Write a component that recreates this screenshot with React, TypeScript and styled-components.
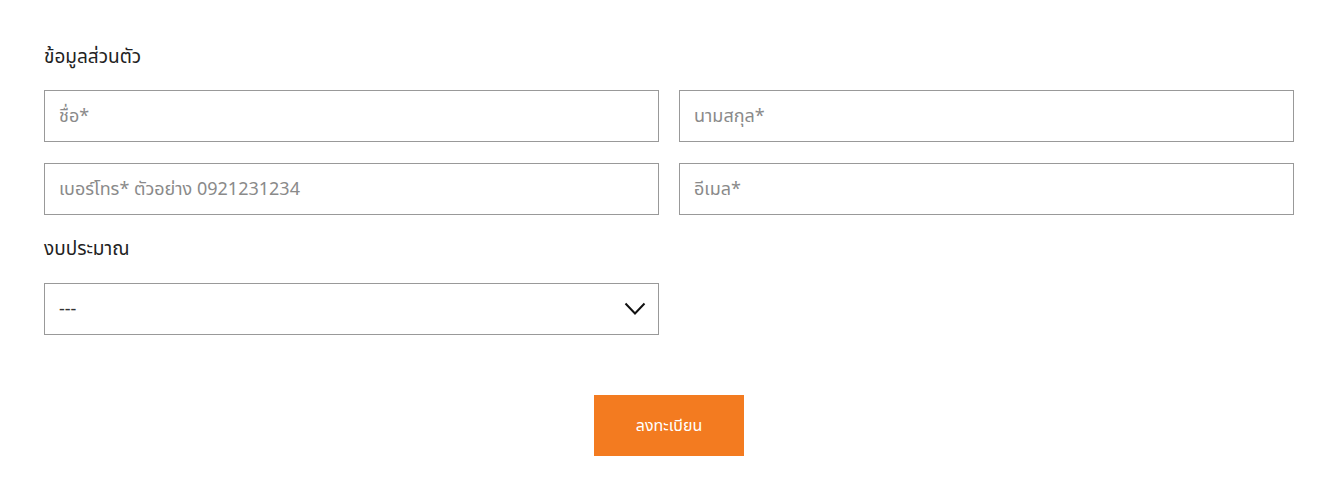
import React from "react";
import styled, { createGlobalStyle } from "styled-components";

const Global = createGlobalStyle`
  html, body { margin: 0; padding: 0; background: #fff; }
  body { font-family: "Noto Sans Thai", "Noto Sans", "DejaVu Sans", sans-serif; }
  * { box-sizing: border-box; }
`;

const Page = styled.div`
  padding: 44px 36px 26px 44px;
  width: 1330px;
`;

const SectionTitle = styled.div`
  font-size: 19px;
  color: #222;
  line-height: 28px;
  margin-bottom: 18px;
`;

const Grid = styled.div`
  display: grid;
  grid-template-columns: 615px 615px;
  column-gap: 20px;
  row-gap: 21px;
`;

const Field = styled.input`
  height: 52px;
  width: 100%;
  border: 1px solid #999;
  padding: 0 14px;
  font-family: inherit;
  font-size: 18px;
  color: #333;
  outline: none;
  background: #fff;
  &::placeholder { color: #8a8a8a; }
`;

const Label = styled.div`
  font-size: 19px;
  color: #222;
  line-height: 28px;
  margin: 21px 0 19px;
`;

const SelectBox = styled.div`
  position: relative;
  width: 615px;
  height: 52px;
  border: 1px solid #999;
  display: flex;
  align-items: center;
  justify-content: space-between;
  padding: 0 12px 0 14px;
  font-size: 18px;
  color: #333;
`;

const Chevron = styled.svg`
  width: 22px;
  height: 14px;
`;

const ButtonRow = styled.div`
  width: 1250px;
  display: flex;
  justify-content: center;
  margin-top: 60px;
`;

const Submit = styled.button`
  width: 150px;
  height: 61px;
  background: #f37b20;
  border: none;
  color: #fff;
  font-family: inherit;
  font-size: 16px;
  cursor: pointer;
`;

export default function App() {
  return (
    <Page>
      <Global />
      <SectionTitle>ข้อมูลส่วนตัว</SectionTitle>
      <Grid>
        <Field placeholder="ชื่อ*" />
        <Field placeholder="นามสกุล*" />
        <Field placeholder="เบอร์โทร* ตัวอย่าง 0921231234" />
        <Field placeholder="อีเมล*" />
      </Grid>
      <Label>งบประมาณ</Label>
      <SelectBox>
        <span>---</span>
        <Chevron viewBox="0 0 22 14" fill="none">
          <path d="M1.5 1.5 L11 11.5 L20.5 1.5" stroke="#111" strokeWidth="2" />
        </Chevron>
      </SelectBox>
      <ButtonRow>
        <Submit>ลงทะเบียน</Submit>
      </ButtonRow>
    </Page>
  );
}
